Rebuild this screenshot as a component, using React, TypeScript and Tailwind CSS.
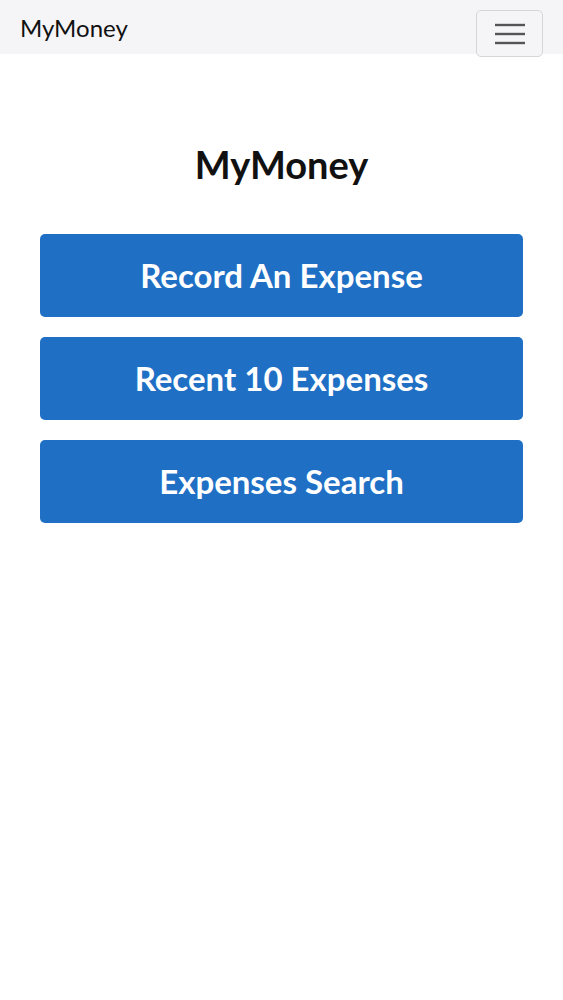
const actions = ['Record An Expense', 'Recent 10 Expenses', 'Expenses Search']

export default function App() {
    return (
        <div className="min-h-screen bg-white font-['Lato','Noto_Sans',sans-serif] text-[#111]">
            {/* Navbar */}
            <nav className="h-[54px] bg-[#f5f4f7] flex items-start justify-between pl-5 pr-5">
                <span className="text-[24px] leading-none mt-[16px] text-[#111]">MyMoney</span>
                <button className="mt-[10px] w-[67px] h-[47px] border border-[#d6d6da] rounded-[5px] bg-[#f5f4f7] flex items-center justify-center">
                    <svg width="32" height="22" viewBox="0 0 32 22">
                        <g stroke="#555" strokeWidth="2.4">
                            <line x1="1" y1="2" x2="31" y2="2" />
                            <line x1="1" y1="11" x2="31" y2="11" />
                            <line x1="1" y1="20" x2="31" y2="20" />
                        </g>
                    </svg>
                </button>
            </nav>

            {/* Content */}
            <main className="px-10 pt-[91px]">
                <h1 className="text-center text-[38px] font-bold leading-none mb-[51px]">MyMoney</h1>
                <div className="flex flex-col gap-5">
                    {actions.map((label) => (
                        <button
                            key={label}
                            className="h-[83px] w-full rounded-[5px] bg-[#1f6fc5] text-white text-[33px] font-bold"
                        >
                            {label}
                        </button>
                    ))}
                </div>
            </main>
        </div>
    )
}
